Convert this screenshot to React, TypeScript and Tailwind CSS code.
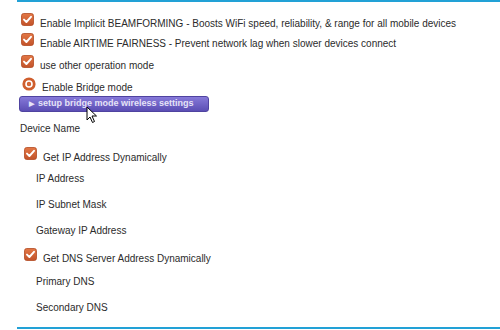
import React from 'react';

function Check() {
  return (
    <svg width="13" height="13" viewBox="0 0 13 13" className="shrink-0">
      <defs>
        <linearGradient id="cb" x1="0" y1="0" x2="0" y2="1">
          <stop offset="0" stopColor="#e37745" />
          <stop offset="1" stopColor="#c2532a" />
        </linearGradient>
      </defs>
      <rect x="0.5" y="0.5" width="12" height="12" rx="2.2" fill="url(#cb)" stroke="#b24a22" strokeWidth="0.8" />
      <path d="M3 6.6 L5.4 9 L10 3.8" fill="none" stroke="#ffffff" strokeWidth="1.9" strokeLinecap="round" strokeLinejoin="round" />
    </svg>
  );
}

function Radio() {
  return (
    <svg width="14" height="14" viewBox="0 0 14 14" className="shrink-0">
      <circle cx="7" cy="7" r="6.6" fill="#cf5e2d" />
      <circle cx="7" cy="7" r="3" fill="none" stroke="#ffffff" strokeWidth="1.6" />
      <circle cx="7" cy="7" r="1.6" fill="#d8693a" />
    </svg>
  );
}

function Cursor() {
  return (
    <svg width="12" height="18" viewBox="0 0 12 18" className="absolute left-[86px] top-[106px]">
      <path d="M1 1 L1 14 L4 11 L6.5 16.5 L8.5 15.5 L6 10 L10.5 10 Z" fill="#ffffff" stroke="#000000" strokeWidth="1" strokeLinejoin="round" />
    </svg>
  );
}

function CheckRow({ label, height, indent = 'pl-[21px]' }: { label: string; height: string; indent?: string }) {
  return (
    <div className={`flex items-start gap-[6px] ${height} ${indent}`}>
      <Check />
      <span className="mt-[5px] whitespace-nowrap leading-[12px]">{label}</span>
    </div>
  );
}

export default function App() {
  return (
    <div className="relative h-[330px] w-[500px] overflow-hidden bg-white font-['Liberation_Sans',Arial,sans-serif] text-[10px] text-[#2b2b2b]">
      <div className="ml-[17px] h-[2px] bg-[#22a1d6]" />
      <div className="pt-[11px]">
        <CheckRow height="h-[20px]" label="Enable Implicit BEAMFORMING - Boosts WiFi speed, reliability, & range for all mobile devices" />
        <CheckRow height="h-[22px]" label="Enable AIRTIME FAIRNESS - Prevent network lag when slower devices connect" />
        <CheckRow height="h-[22px]" label="use other operation mode" />
        <div className="flex h-[19px] items-start gap-[6px] pl-[22px]">
          <Radio />
          <span className="mt-[5px] leading-[12px]">Enable Bridge mode</span>
        </div>
        <div className="ml-[19px] flex h-[16px] w-[190px] items-center whitespace-nowrap rounded-[3px] border border-[#4f43a0] bg-[linear-gradient(180deg,#8679d9,#5b4eb4)] pl-[9px] text-[9px] font-bold text-[#e6e3f7]">
          <span className="mr-[4px] text-[7px]">▶</span>
          setup bridge mode wireless settings
        </div>
        <div className="mt-[11px] h-[12px] pl-[20px] leading-[12px]">Device Name</div>
        <div className="mt-[12px]">
          <CheckRow height="h-[24px]" indent="pl-[24px]" label="Get IP Address Dynamically" />
        </div>
        <div className="flex flex-col pl-[36px] leading-[12px]">
          <span className="h-[26px] pt-[2px]">IP Address</span>
          <span className="h-[26px] pt-[2px]">IP Subnet Mask</span>
          <span className="h-[25px] pt-[2px]">Gateway IP Address</span>
        </div>
        <CheckRow height="h-[25px]" indent="pl-[24px]" label="Get DNS Server Address Dynamically" />
        <div className="flex flex-col pl-[36px] leading-[12px]">
          <span className="h-[26px] pt-[3px]">Primary DNS</span>
          <span className="h-[28px] pt-[3px]">Secondary DNS</span>
        </div>
      </div>
      <div className="ml-[17px] h-[2px] bg-[#22a1d6]" />
      <Cursor />
    </div>
  );
}
